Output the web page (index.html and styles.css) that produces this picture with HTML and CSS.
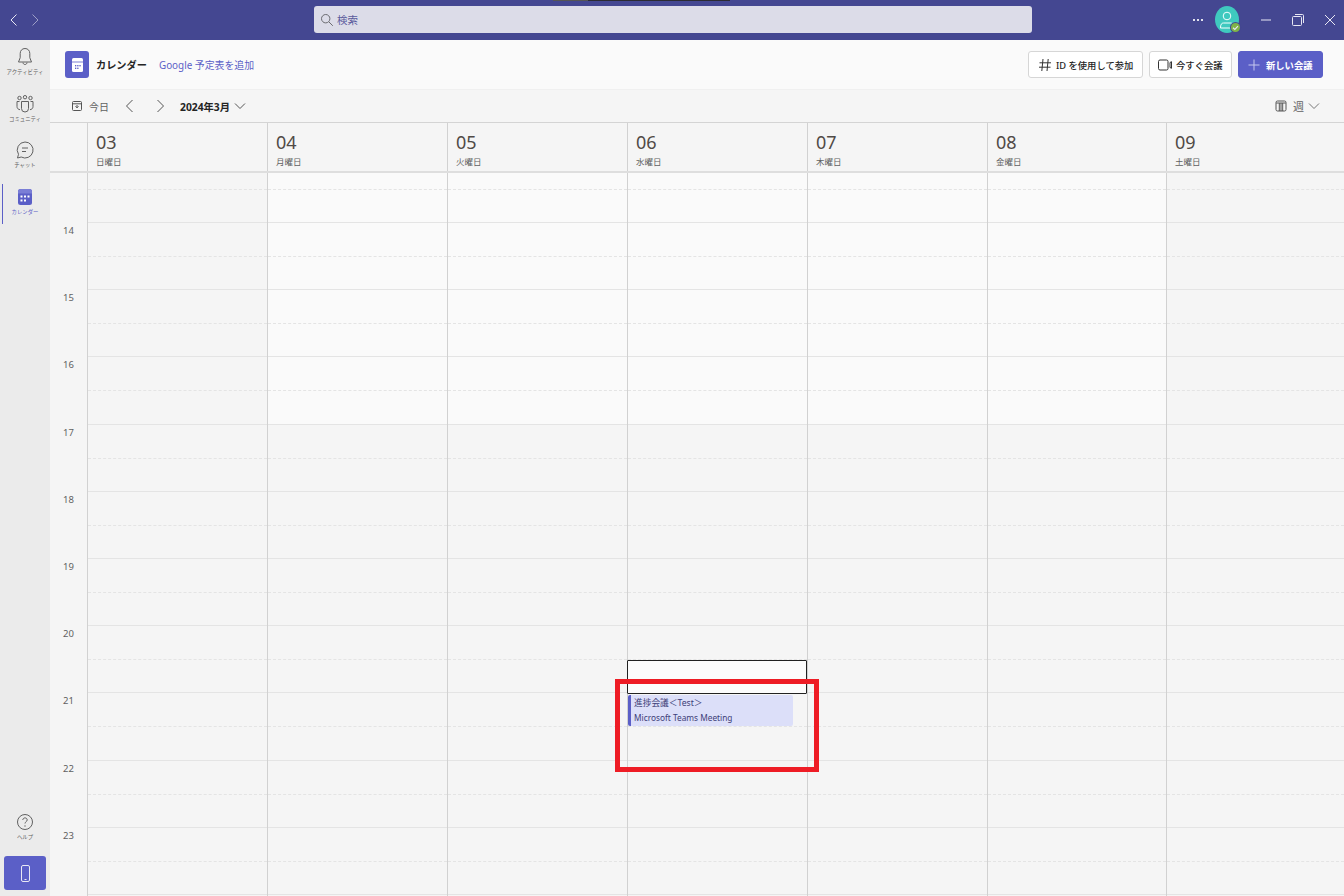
FILE: index.html
```html
<!DOCTYPE html>
<html lang="ja">
<head>
<meta charset="utf-8">
<title>カレンダー</title>
<link rel="stylesheet" href="styles.css">
</head>
<body>
<div class="app">
  <header class="titlebar">
    <div class="notch"><span class="notch-a"></span><span class="notch-b"></span></div>
    <div class="nav-arrows">
      <svg class="ic16" viewBox="0 0 16 16"><path d="M10.500 2.500 5 8l5.500 5.500" class="wh"/></svg>
      <svg class="ic16 dim" viewBox="0 0 16 16"><path d="m5.500 2.500 5.500 5.500-5.500 5.500" class="wh"/></svg>
    </div>
    <div class="search">
      <svg class="search-ic" viewBox="0 0 14 14"><circle cx="5.700" cy="5.700" r="4.200" class="gr"/><path d="m8.800 8.800 4 4" class="gr"/></svg>
      <span>検索</span>
    </div>
    <div class="title-right">
      <span class="more"><i></i><i></i><i></i></span>
      <div class="avatar">
        <svg viewBox="0 0 24 27" class="avatar-ic"><circle cx="12" cy="10" r="3.800" class="wh"/><path d="M5.500 22c0-3.500 1-5 3-5h7c2 0 3 1.500 3 5z" class="wh"/></svg>
        <span class="presence"><svg viewBox="0 0 8 8"><path d="m1.800 4.200 1.600 1.500 2.800-3" class="wh"/></svg></span>
      </div>
      <div class="win">
        <svg class="ic16" viewBox="0 0 16 16"><path d="M3 8h10" class="wh"/></svg>
        <svg class="ic16" viewBox="0 0 16 16"><rect x="2.500" y="4.500" width="9" height="9" rx="1" class="wh"/><path d="M5 2.500h7.500a1 1 0 0 1 1 1V11" class="wh"/></svg>
        <svg class="ic16" viewBox="0 0 16 16"><path d="m3 3 10 10M13 3 3 13" class="wh"/></svg>
      </div>
    </div>
  </header>
  <div class="body">
    <nav class="rail">
      <div class="rail-top">
        <a class="rail-item">
          <svg class="rail-ic" viewBox="0 0 20 20"><path d="M10 1.500c-3 0-4.800 2.200-4.800 5v4.200L3.500 15h13l-1.700-4.300V6.500c0-2.800-1.800-5-4.800-5zM8 15.500c0 1.200.9 2 2 2s2-.8 2-2" class="ln"/></svg>
          <span>アクティビティ</span>
        </a>
        <a class="rail-item">
          <svg class="rail-ic" viewBox="0 0 20 20"><circle cx="4.500" cy="4" r="1.700" class="ln"/><circle cx="10" cy="3.200" r="1.700" class="ln"/><circle cx="15.500" cy="4" r="1.700" class="ln"/><path d="M6.500 7.500h7v7a3.500 3.500 0 0 1-7 0zM4.500 7.500H2v5c0 1.800 1.200 3 3 3.200M15.500 7.500H18v5c0 1.800-1.200 3-3 3.200" class="ln"/></svg>
          <span>コミュニティ</span>
        </a>
        <a class="rail-item">
          <svg class="rail-ic" viewBox="0 0 20 20"><path d="M10 2a8 8 0 1 1-3.800 15L2.500 18l1-3.700A8 8 0 0 1 10 2zM7 8h6M7 11.500h4" class="ln"/></svg>
          <span>チャット</span>
        </a>
        <a class="rail-item active">
          <svg class="rail-ic" viewBox="0 0 20 20"><rect x="3" y="2" width="14" height="16" rx="2.500" class="cal-f"/><path d="M3 6.500v-2A2.500 2.500 0 0 1 5.500 2h9A2.500 2.500 0 0 1 17 4.500v2z" class="cal-d"/><g class="cal-w"><rect x="5.500" y="8.500" width="2" height="2"/><rect x="9" y="8.500" width="2" height="2"/><rect x="12.500" y="8.500" width="2" height="2"/><rect x="5.500" y="12.500" width="2" height="2"/><rect x="9" y="12.500" width="2" height="2"/></g></svg>
          <span>カレンダー</span>
        </a>
      </div>
      <div class="rail-bottom">
        <a class="rail-item help">
          <svg class="rail-ic" viewBox="0 0 20 20"><circle cx="10" cy="10" r="7.500" class="ln"/><path d="M7.800 8c0-1.300 1-2.100 2.200-2.100s2.200.8 2.200 2c0 1.800-2.200 1.800-2.200 3.600" class="ln"/><circle cx="10" cy="14" r=".7" class="dot"/></svg>
          <span>ヘルプ</span>
        </a>
        <div class="phone"><svg viewBox="0 0 9 17"><rect x=".5" y=".5" width="8" height="16" rx="1.500" class="wh"/><path d="M3.500 14.500h2" class="wh"/></svg></div>
      </div>
    </nav>
    <main class="main">
      <section class="head">
        <div class="head-left">
          <div class="app-icon"><svg viewBox="0 0 11 14" preserveAspectRatio="none"><rect x="0" y="0" width="11" height="14" rx="1.500" class="ai-w"/><g class="ai-d"><rect x="0" y="3.600" width="11" height=".8"/><rect x="3" y="7" width="1.300" height="1.400"/><rect x="5.200" y="7" width="1.300" height="1.400"/><rect x="7.400" y="7" width="1.300" height="1.400"/><rect x="3" y="9.600" width="1.300" height="1.400"/><rect x="5.200" y="9.600" width="1.300" height="1.400"/></g></svg></div>
          <h1>カレンダー</h1>
          <a class="google">Google 予定表を追加</a>
        </div>
        <div class="head-right">
          <button class="btn btn-id"><svg class="ic16" viewBox="0 0 16 16"><path d="M6 2 4.800 14M11.200 2 10 14M2.500 5.800h11.500M2 10.200h11.500" class="dk"/></svg><span>ID を使用して参加</span></button>
          <button class="btn btn-now"><svg class="ic16" viewBox="0 0 16 16"><rect x="1.500" y="3" width="9.500" height="10" rx="1.500" class="dk"/><path d="m13 5.500 1.500-.8v6.600l-1.500-.8z" class="dk"/></svg><span>今すぐ会議</span></button>
          <button class="btn btn-new"><svg class="ic16" viewBox="0 0 16 16"><path d="M8 2.500v11M2.500 8h11" class="pl"/></svg><span>新しい会議</span></button>
        </div>
      </section>
      <section class="toolbar">
        <div class="tool-left">
          <svg class="today-ic" viewBox="0 0 12 12"><rect x="1.500" y="1.500" width="9" height="9" rx="1" class="gy"/><path d="M1.500 3.800h9M4.500 6.300 6 7.800l1.500-1.500M6 5v3" class="gy"/></svg>
          <span class="today">今日</span>
          <svg class="chev" viewBox="0 0 16 16"><path d="M10.500 2 4.500 8l6 6" class="gy"/></svg>
          <svg class="chev" viewBox="0 0 16 16"><path d="m5.500 2 6 6-6 6" class="gy"/></svg>
          <strong class="month">2024年3月</strong>
          <svg class="chev-d" viewBox="0 0 12 8"><path d="m1 1.500 5 5 5-5" class="gy"/></svg>
        </div>
        <div class="tool-right">
          <svg class="week-ic" viewBox="0 0 12 12"><rect x="1" y="1" width="10" height="10" rx="1.500" class="gy"/><path d="M1.200 3h9.600M4.300 3v8M6 3v8M7.700 3v8" class="gy"/></svg>
          <span class="week">週</span>
          <svg class="chev-d" viewBox="0 0 12 8"><path d="m1 1.500 5 5 5-5" class="lg"/></svg>
        </div>
      </section>
      <section class="days">
        <div class="gutter-head"></div>
        <div class="day"><b>03</b><span>日曜日</span></div>
        <div class="day"><b>04</b><span>月曜日</span></div>
        <div class="day"><b>05</b><span>火曜日</span></div>
        <div class="day"><b>06</b><span>水曜日</span></div>
        <div class="day"><b>07</b><span>木曜日</span></div>
        <div class="day"><b>08</b><span>金曜日</span></div>
        <div class="day"><b>09</b><span>土曜日</span></div>
      </section>
      <section class="grid">
        <div class="hours">
          <div class="hour">14</div><div class="hour">15</div><div class="hour">16</div><div class="hour">17</div><div class="hour">18</div>
          <div class="hour">19</div><div class="hour">20</div><div class="hour">21</div><div class="hour">22</div><div class="hour">23</div>
        </div>
        <div class="col">
          <div class="slot first"></div><div class="slot"></div><div class="slot"></div><div class="slot"></div><div class="slot"></div><div class="slot"></div>
          <div class="slot"></div><div class="slot"></div><div class="slot"></div><div class="slot"></div><div class="slot"></div>
        </div>
        <div class="col work">
          <div class="slot first"></div><div class="slot"></div><div class="slot"></div><div class="slot"></div><div class="slot"></div><div class="slot"></div>
          <div class="slot"></div><div class="slot"></div><div class="slot"></div><div class="slot"></div><div class="slot"></div>
        </div>
        <div class="col work">
          <div class="slot first"></div><div class="slot"></div><div class="slot"></div><div class="slot"></div><div class="slot"></div><div class="slot"></div>
          <div class="slot"></div><div class="slot"></div><div class="slot"></div><div class="slot"></div><div class="slot"></div>
        </div>
        <div class="col work">
          <div class="slot first"></div><div class="slot"></div><div class="slot"></div><div class="slot"></div><div class="slot"></div><div class="slot"></div>
          <div class="slot"></div><div class="slot"></div><div class="slot"></div><div class="slot"></div><div class="slot"></div>
        </div>
        <div class="col work">
          <div class="slot first"></div><div class="slot"></div><div class="slot"></div><div class="slot"></div><div class="slot"></div><div class="slot"></div>
          <div class="slot"></div><div class="slot"></div><div class="slot"></div><div class="slot"></div><div class="slot"></div>
        </div>
        <div class="col work">
          <div class="slot first"></div><div class="slot"></div><div class="slot"></div><div class="slot"></div><div class="slot"></div><div class="slot"></div>
          <div class="slot"></div><div class="slot"></div><div class="slot"></div><div class="slot"></div><div class="slot"></div>
        </div>
        <div class="col">
          <div class="slot first"></div><div class="slot"></div><div class="slot"></div><div class="slot"></div><div class="slot"></div><div class="slot"></div>
          <div class="slot"></div><div class="slot"></div><div class="slot"></div><div class="slot"></div><div class="slot"></div>
        </div>
      </section>
    </main>
  </div>
  <div class="sel"></div>
  <div class="event"><span class="ev-t">進捗会議＜Test＞</span><span class="ev-s">Microsoft Teams Meeting</span></div>
  <div class="redbox"></div>
</div>
</body>
</html>
```
FILE: styles.css
```css
* { box-sizing: border-box; }
html, body { margin: 0; height: 100%; overflow: hidden; }
body { font-family: "Noto Sans", "Noto Sans CJK JP", sans-serif; color: #242424; background: #f5f5f5; }
svg { display: block; flex: none; fill: none; }
.wh, .gr, .ln, .dk, .pl, .gy, .lg { fill: none; stroke-width: 1; }
.wh { stroke: #e8e8f4; }
.gr { stroke: #6b6b70; }
.ln { stroke: #616161; }
.dk { stroke: #333; }
.pl { stroke: #c6c8ee; }
.gy { stroke: #555; }
.lg { stroke: #777; }
.dot { fill: #616161; }
.cal-f { fill: #5b5fc7; }
.cal-d { fill: #7a7ed6; }
.cal-w { fill: #fff; }
.ai-w { fill: #fff; }
.ai-d { fill: #5b5fc7; }
.ic16 { width: 16px; height: 16px; }

.app { position: relative; width: 1344px; height: 896px; display: flex; flex-direction: column; overflow: hidden; }

.titlebar { position: relative; height: 40px; flex: none; background: #444791; display: flex; align-items: center; }
.notch { position: absolute; left: 553px; top: 0; display: flex; height: 1px; }
.notch-a { width: 35px; background: #555; }
.notch-b { width: 142px; background: #2b2b33; }
.nav-arrows { display: flex; gap: 5px; margin-left: 6px; width: 308px; flex: none; }
.nav-arrows .dim { opacity: .55; }
.search { width: 718px; height: 27px; flex: none; margin-bottom: 1px; background: #dcdce8; border-radius: 3px; display: flex; align-items: center; padding-left: 6px; gap: 3px; font-size: 10.500px; color: #5a5a9c; }
.search-ic { width: 14px; height: 14px; }
.title-right { flex: 1; display: flex; align-items: center; }
.more { margin-left: 161px; width: 22px; display: flex; gap: 2.500px; }
.more i { width: 1.500px; height: 1.500px; background: #fff; border-radius: 50%; }
.avatar { position: relative; width: 24px; height: 27px; margin-bottom: 1px; border-radius: 50%; background: #3fc9bf; }
.avatar-ic { width: 24px; height: 27px; }
.avatar-ic .wh { stroke: #f4ffff; }
.presence { position: absolute; right: -1px; bottom: 1px; width: 9px; height: 9px; border-radius: 50%; background: #7fb347; box-shadow: 0 0 0 1px #444791; }
.presence svg { width: 9px; height: 9px; }
.win { display: flex; gap: 16px; margin-left: 19px; }

.body { flex: 1; display: flex; min-height: 0; }
.rail { width: 50px; flex: none; background: #ebebeb; display: flex; flex-direction: column; justify-content: space-between; }
.rail-top { display: flex; flex-direction: column; padding-top: 6px; }
.rail-item { position: relative; height: 46.670px; display: flex; flex-direction: column; align-items: center; font-size: 5.400px; line-height: 10px; color: #616161; white-space: nowrap; padding-top: 1px; }
.rail-ic { width: 20px; height: 20px; }
.rail-item.active { color: #5b5fc7; }
.rail-item.active::before { content: ""; position: absolute; left: 1.500px; top: -2px; width: 1.500px; height: 40px; background: #5b5fc7; }
.rail-bottom { display: flex; flex-direction: column; align-items: center; }
.rail-item.help { width: 50px; height: 45px; }
.phone { width: 42px; height: 34px; margin-bottom: 6px; background: #5b5fc7; border-radius: 3px; display: flex; align-items: center; justify-content: center; }
.phone svg { width: 9px; height: 17px; }

.main { flex: 1; min-width: 0; display: flex; flex-direction: column; }
.head { height: 50px; flex: none; background: #fafafa; border-bottom: 1px solid #f0f0f0; display: flex; align-items: center; justify-content: space-between; padding: 0 21px 0 15px; }
.head-left { display: flex; align-items: center; }
.app-icon { width: 24px; height: 27px; background: #5b5fc7; border-radius: 3px; display: flex; align-items: center; justify-content: center; }
.app-icon svg { width: 11px; height: 14px; }
h1 { margin: 0 0 0 7px; font-size: 10.200px; font-weight: 700; color: #242424; }
.google { margin-left: 12px; font-size: 9.900px; color: #5b5fc7; }
.head-right { display: flex; gap: 6px; }
.btn { height: 27px; border: 1px solid #d6d6d6; border-radius: 3px; background: #fff; font: 500 9.300px "Noto Sans", "Noto Sans CJK JP", sans-serif; color: #242424; display: flex; align-items: center; padding: 0; white-space: nowrap; }
.btn-id { width: 115px; padding-left: 8px; gap: 3px; }
.btn-now { width: 83px; padding-left: 7px; gap: 3px; }
.btn-new { width: 85px; padding-left: 7px; gap: 4px; background: #5b5fc7; border-color: #5b5fc7; color: #fff; font-weight: 700; }

.toolbar { height: 32px; flex: none; display: flex; align-items: center; justify-content: space-between; padding: 0 24px 0 21px; background: #f5f5f5; }
.tool-left, .tool-right { display: flex; align-items: center; }
.today-ic { width: 12px; height: 12px; }
.today { margin-left: 6px; font-size: 10px; color: #616161; }
.toolbar .chev { width: 16px; height: 16px; }
.today + .chev { margin-left: 13px; }
.chev + .chev { margin-left: 14px; }
.month { margin-left: 12px; font-size: 10.300px; font-weight: 700; color: #242424; }
.chev-d { width: 12px; height: 8px; margin-left: 4px; }
.week-ic { width: 12px; height: 12px; }
.week { margin-left: 6px; font-size: 11px; color: #616161; }

.days { height: 51px; flex: none; display: grid; grid-template-columns: 37px repeat(5, 180px) 179px 1fr; border-top: 1px solid #d4d4d4; border-bottom: 2px solid #dedede; background: #f5f5f5; }
.day { border-left: 1px solid #d1d1d1; padding: 7px 0 0 8px; display: flex; flex-direction: column; }
.day b { font-weight: 400; font-size: 18px; line-height: 24px; color: #504a46; }
.day span { font-size: 8.500px; line-height: 12px; color: #616161; margin-top: 2px; }

.grid { flex: 1; min-height: 0; display: grid; grid-template-columns: 37px repeat(5, 180px) 179px 1fr; background: #f5f5f5; overflow: hidden; }
.hours { padding-top: 50px; }
.hour { height: 67.200px; font-size: 9.500px; color: #616161; text-align: center; line-height: 16px; }
.col { border-left: 1px solid #d1d1d1; }
.slot { height: 67.200px; border-bottom: 1px solid #e4e4e4; position: relative; }
.slot::after { content: ""; position: absolute; left: 0; right: 0; top: 33px; border-top: 1px dashed #e4e4e4; }
.slot.first { height: 50px; }
.slot.first::after { top: 16px; }
.col.work .slot:nth-child(-n+4) { background: #fafafa; }

.sel { position: absolute; left: 627px; top: 660px; width: 180px; height: 34px; border: 1px solid #222; background: #fcfcfc; border-radius: 1px; }
.event { position: absolute; left: 628px; top: 695px; width: 165px; height: 31px; padding: 1px 0 0 3px; background: #dcdff9; border-left: 3px solid #5b5fc7; border-radius: 2px; display: flex; flex-direction: column; color: #3d3e78; white-space: nowrap; }
.ev-t { font-size: 8.700px; line-height: 15px; }
.ev-s { font-size: 8.300px; line-height: 14px; }
.redbox { position: absolute; left: 615px; top: 679px; width: 204px; height: 93px; border: 5px solid #ee1c25; }
```
